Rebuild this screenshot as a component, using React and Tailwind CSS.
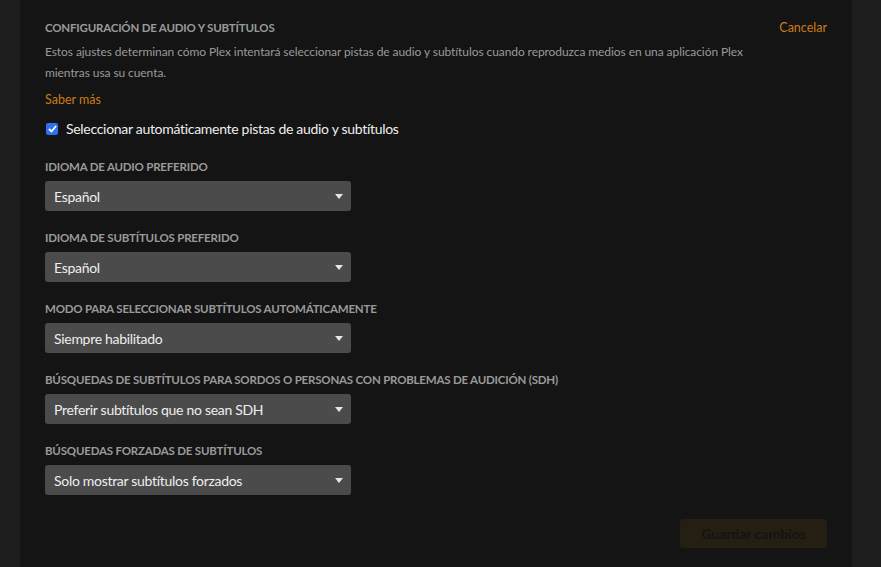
import React from "react";

function Select({ value }) {
  return (
    <div className="flex h-[30px] w-[306px] items-center justify-between rounded-[3px] bg-[#4b4b4b] pl-[9px] pr-[8px]">
      <span className="text-[14px] tracking-[-0.3px] text-[#eeeeee]">{value}</span>
      <svg width="8" height="5" viewBox="0 0 8 5">
        <path d="M0 0 L8 0 L4 5 Z" fill="#e6e6e6" />
      </svg>
    </div>
  );
}

function Field({ label, value }) {
  return (
    <div className="flex flex-col">
      <div className="text-[11.5px] font-bold uppercase leading-[16px] tracking-[-0.2px] text-[#9a9a9a]">{label}</div>
      <div className="mt-[6px]">
        <Select value={value} />
      </div>
    </div>
  );
}

export default function App() {
  return (
    <div
      className="flex h-[567px] w-[881px] overflow-hidden bg-[#1e1e1e]"
      style={{ fontFamily: 'Lato, "Noto Sans", sans-serif' }}
    >
      <div className="ml-[20px] flex w-[832px] flex-col bg-[#141414] px-[25px] pt-[20px]">
        <div className="flex items-start justify-between">
          <div className="text-[11.5px] font-bold uppercase leading-[16px] tracking-[-0.2px] text-[#9a9a9a]">
            Configuración de audio y subtítulos
          </div>
          <div className="text-[12.5px] leading-[16px] text-[#cc7b19]">Cancelar</div>
        </div>
        <p className="mt-[5px] text-[12px] leading-[21px] tracking-[-0.08px] text-[#9a9a9a]">
          Estos ajustes determinan cómo Plex intentará seleccionar pistas de audio y subtítulos cuando reproduzca medios en una aplicación Plex
          <br />
          mientras usa su cuenta.
        </p>
        <div className="mt-[9px] text-[12.5px] leading-[16px] text-[#cc7b19]">Saber más</div>
        <div className="mt-[12px] flex items-center gap-[8px]">
          <div className="ml-[1px] flex h-[12px] w-[12px] items-center justify-center rounded-[2px] bg-[#2f6ff0]">
            <svg width="9" height="8" viewBox="0 0 9 8">
              <path d="M1 4 L3.5 6.5 L8 1" stroke="white" strokeWidth="1.8" fill="none" />
            </svg>
          </div>
          <span className="text-[14px] leading-[18px] tracking-[-0.3px] text-[#eeeeee]">
            Seleccionar automáticamente pistas de audio y subtítulos
          </span>
        </div>
        <div className="mt-[21px] flex flex-col gap-[19px]">
          <Field label="Idioma de audio preferido" value="Español" />
          <Field label="Idioma de subtítulos preferido" value="Español" />
          <Field label="Modo para seleccionar subtítulos automáticamente" value="Siempre habilitado" />
          <Field label="Búsquedas de subtítulos para sordos o personas con problemas de audición (SDH)" value="Preferir subtítulos que no sean SDH" />
          <Field label="Búsquedas forzadas de subtítulos" value="Solo mostrar subtítulos forzados" />
        </div>
        <div className="mt-[24px] flex justify-end">
          <div className="flex h-[29px] w-[147px] items-center justify-center rounded-[3px] bg-[#251e13] text-[14px] font-bold text-[#141414]">
            Guardar cambios
          </div>
        </div>
      </div>
    </div>
  );
}
